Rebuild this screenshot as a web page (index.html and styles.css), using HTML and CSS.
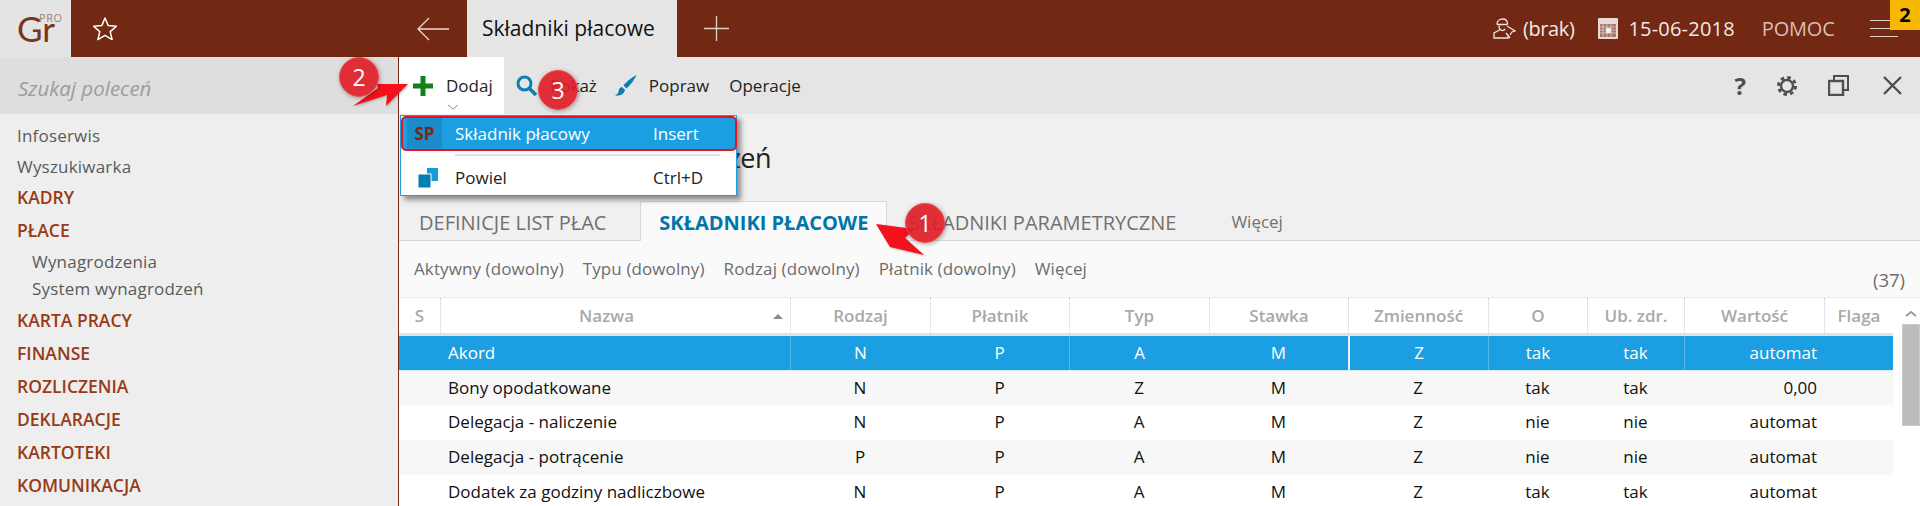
FILE: index.html
```html
<!DOCTYPE html>
<html lang="pl">
<head>
<meta charset="utf-8">
<title>Składniki płacowe</title>
<link rel="stylesheet" href="styles.css">
</head>
<body>
<div class="app">
  <header class="topbar">
    <div class="logo"><span class="logo-gr">Gr</span><span class="logo-pro">PRO</span></div>
    <div class="star-cell">
      <svg width="26" height="26" viewBox="0 0 26 26"><polygon points="13,2 16.2,9.6 24.4,10.2 18.2,15.6 20.1,23.6 13,19.3 5.9,23.6 7.8,15.6 1.6,10.2 9.8,9.6" fill="none" stroke="#fff" stroke-width="1.5" stroke-linejoin="round"/></svg>
    </div>
    <div class="back-cell">
      <svg width="34" height="24" viewBox="0 0 34 24"><path d="M33 12H2M13 1 2 12l11 11" fill="none" stroke="#e9d9d3" stroke-width="1.3"/></svg>
    </div>
    <div class="top-tab">Składniki płacowe</div>
    <div class="plus-cell">
      <svg width="25" height="25" viewBox="0 0 25 25"><path d="M12.500 0v25M0 12.500h25" stroke="#e2cfc8" stroke-width="1.300"/></svg>
    </div>
    <div class="top-right">
      <svg class="ic-user" width="23" height="21" viewBox="0 0 23 21"><path d="M4 6c0-3 2.500-5 5.500-5s5 2 5 5l-1 .5H5zM6 7.500c0 3 1.500 5 3.500 5 1 0 2-.6 2.700-1.700M6.500 12 1 15v5h14v-3.500M13 15l4 5M14 8l8 5-3 1-2 3" fill="none" stroke="#f1e4df" stroke-width="1.300"/></svg>
      <span class="top-val brak">(brak)</span>
      <svg class="ic-cal" width="20" height="21" viewBox="0 0 20 21"><rect width="20" height="21" rx="1" fill="#e8d9d3"/><rect x="2" y="6" width="16" height="13" fill="#a2796c"/><path d="M2 9h16M2 12h16M2 15h16M5 6v13M9 6v13M13 6v13" stroke="#e8d9d3" stroke-width=".7"/><rect x="8" y="10" width="5" height="5" fill="#f4ece8"/></svg>
      <span class="top-val date">15-06-2018</span>
      <span class="pomoc">POMOC</span>
      <div class="burger"><i></i><i></i><i></i></div>
    </div>
    <span class="top-badge">2</span>
  </header>

  <div class="main">
    <aside class="sidebar">
      <div class="search">Szukaj poleceń</div>
      <nav class="nav">
        <a class="nav-link">Infoserwis</a>
        <a class="nav-link">Wyszukiwarka</a>
        <a class="nav-group">KADRY</a>
        <a class="nav-group">PŁACE</a>
        <a class="nav-sub">Wynagrodzenia</a>
        <a class="nav-sub">System wynagrodzeń</a>
        <a class="nav-group">KARTA PRACY</a>
        <a class="nav-group">FINANSE</a>
        <a class="nav-group">ROZLICZENIA</a>
        <a class="nav-group">DEKLARACJE</a>
        <a class="nav-group">KARTOTEKI</a>
        <a class="nav-group">KOMUNIKACJA</a>
      </nav>
    </aside>

    <section class="content">
      <div class="toolbar">
        <div class="tool tool-add">
          <svg width="20" height="20" viewBox="0 0 20 20"><path d="M10 0v20M0 10h20" stroke="#14801c" stroke-width="5"/></svg>
          <span>Dodaj</span>
          <svg class="chev" width="12" height="6" viewBox="0 0 12 6"><path d="M1 1l5 4 5-4" fill="none" stroke="#8a8a8a"/></svg>
        </div>
        <div class="tool tool-show">
          <svg width="21" height="21" viewBox="0 0 21 21"><circle cx="8.500" cy="8.500" r="6.500" fill="none" stroke="#0a7fb3" stroke-width="3"/><path d="M13 13l7 7" stroke="#0a7fb3" stroke-width="3.500"/></svg>
          <span>Pokaż</span>
        </div>
        <div class="tool tool-edit">
          <svg width="22" height="21" viewBox="0 0 22 21"><path d="M21.500 0C18 1.500 12 6 8.500 10.500l3 3C15.500 10 20 4 21.500 0zM7 12c-3 .5-3 3-3.500 5-.3 1.500-2 2.500-3.500 3.500 4 .6 8.500-.5 10-5.500z" fill="#0a7fb3"/></svg>
          <span>Popraw</span>
        </div>
        <div class="tool tool-ops"><span>Operacje</span></div>
        <div class="tool-right">
          <span class="q">?</span>
          <svg width="22" height="22" viewBox="0 0 22 22"><circle cx="11" cy="11" r="6" fill="none" stroke="#4e4e4e" stroke-width="2.400"/><circle cx="11" cy="11" r="8.500" fill="none" stroke="#4e4e4e" stroke-width="3" stroke-dasharray="3.500 3.180"/></svg>
          <svg width="21" height="21" viewBox="0 0 21 21"><path d="M6 5V1h14v14h-5" fill="none" stroke="#4e4e4e" stroke-width="2"/><rect x="1" y="6" width="14" height="14" fill="none" stroke="#4e4e4e" stroke-width="2.400"/></svg>
          <svg class="ic-close" width="19" height="19" viewBox="0 0 19 19"><path d="M1 1l17 17M18 1 1 18" stroke="#4e4e4e" stroke-width="2.400"/></svg>
        </div>
      </div>

      <h1 class="title">Składniki wynagrodzeń</h1>

      <div class="tabs">
        <span class="tab">DEFINICJE LIST PŁAC</span>
        <span class="tab active">SKŁADNIKI PŁACOWE</span>
        <span class="tab">SKŁADNIKI PARAMETRYCZNE</span>
        <span class="tab more">Więcej</span>
      </div>

      <div class="filters">
        <span>Aktywny (dowolny)</span>
        <span>Typu (dowolny)</span>
        <span>Rodzaj (dowolny)</span>
        <span>Płatnik (dowolny)</span>
        <span>Więcej</span>
        <span class="count">(37)</span>
      </div>

      <div class="grid-wrap">
        <div class="grid">
          <div class="row head">
            <div>S</div><div class="sorted">Nazwa<i class="sort"></i></div><div>Rodzaj</div><div>Płatnik</div><div>Typ</div><div>Stawka</div><div>Zmienność</div><div>O</div><div>Ub. zdr.</div><div>Wartość</div><div>Flaga</div>
          </div>
          <div class="row sel">
            <div></div><div class="name">Akord</div><div>N</div><div>P</div><div>A</div><div>M</div><div>Z</div><div>tak</div><div>tak</div><div class="val">automat</div><div></div>
          </div>
          <div class="row alt">
            <div></div><div class="name">Bony opodatkowane</div><div>N</div><div>P</div><div>Z</div><div>M</div><div>Z</div><div>tak</div><div>tak</div><div class="val">0,00</div><div></div>
          </div>
          <div class="row">
            <div></div><div class="name">Delegacja - naliczenie</div><div>N</div><div>P</div><div>A</div><div>M</div><div>Z</div><div>nie</div><div>nie</div><div class="val">automat</div><div></div>
          </div>
          <div class="row alt">
            <div></div><div class="name">Delegacja - potrącenie</div><div>P</div><div>P</div><div>A</div><div>M</div><div>Z</div><div>nie</div><div>nie</div><div class="val">automat</div><div></div>
          </div>
          <div class="row">
            <div></div><div class="name">Dodatek za godziny nadliczbowe</div><div>N</div><div>P</div><div>A</div><div>M</div><div>Z</div><div>tak</div><div>tak</div><div class="val">automat</div><div></div>
          </div>
        </div>
        <div class="scrollbar">
          <svg width="12" height="7" viewBox="0 0 12 7"><path d="M1 6l5-4 5 4" fill="none" stroke="#9a9a9a" stroke-width="2"/></svg>
          <div class="thumb"></div>
        </div>
      </div>
    </section>
  </div>

  <div class="menu">
    <div class="menu-item selected">
      <span class="menu-ic sp">SP</span><span class="menu-label">Składnik płacowy</span><span class="menu-key">Insert</span>
    </div>
    <div class="menu-sep"></div>
    <div class="menu-item">
      <span class="menu-ic"><svg width="20" height="20" viewBox="0 0 20 20"><rect x="9" y="0" width="11" height="13" fill="#1b9ad6"/><rect x="0" y="6" width="13" height="14" fill="#007fb5" stroke="#fff"/></svg></span><span class="menu-label">Powiel</span><span class="menu-key">Ctrl+D</span>
    </div>
  </div>

  <svg class="arrows" width="1920" height="506" viewBox="0 0 1920 506">
    <polygon points="408,84 386,106 387,95 353,106 378,88 377,84" fill="#f4111b"/>
    <polygon points="876,224 914,229 905,238 924,255 890,247" fill="#f4111b"/>
  </svg>
  <span class="mark m1">1</span>
  <span class="mark m2">2</span>
  <span class="mark m3">3</span>
</div>
</body>
</html>
```
FILE: styles.css
```css
* { box-sizing: border-box; }
html, body { margin: 0; height: 100%; overflow: hidden; }
body { font-family: "Open Sans", "Noto Sans", sans-serif; font-size: 17px; color: #111; background: #fff; }
.app { position: relative; width: 1920px; height: 506px; overflow: hidden; }

/* top bar */
.topbar { display: flex; align-items: stretch; height: 57px; background: #722812; position: relative; }
.logo { width: 71px; background: #e4e4e4; position: relative; }
.logo-gr { position: absolute; left: 17px; top: 5px; font-family: "Lato", sans-serif; font-size: 35px; line-height: 46px; color: #7a3520; }
.logo-pro { position: absolute; left: 39px; top: 12px; font-size: 11px; line-height: 11px; letter-spacing: .6px; color: #a57d70; }
.star-cell { width: 330px; display: flex; align-items: center; padding-left: 21px; }
.back-cell { width: 66px; display: flex; align-items: center; padding-left: 15px; }
.top-tab { width: 210px; background: #e6e6e6; padding-left: 15px; font-size: 21px; line-height: 57px; color: #111; white-space: nowrap; }
.plus-cell { width: 76px; display: flex; align-items: center; padding-left: 27px; }
.top-right { flex: 1; display: flex; align-items: center; padding-left: 740px; color: #f3e9e5; white-space: nowrap; }
.top-val { font-size: 20px; letter-spacing: -.4px; }
.brak { margin-left: 7px; }
.ic-cal { margin-left: 24px; }
.date { margin-left: 10px; letter-spacing: .2px; }
.pomoc { margin-left: 27px; font-size: 20px; color: #d9bfb6; letter-spacing: -.2px; }
.burger { margin-left: 35px; width: 28px; flex: none; display: flex; flex-direction: column; gap: 7px; }
.burger i { display: block; height: 1px; background: #e3cfc8; }
.top-badge { position: absolute; right: 0; top: 0; width: 30px; height: 30px; background: #f9b800; color: #000; font-size: 20px; font-weight: 700; line-height: 30px; text-align: center; }

/* layout */
.main { display: flex; height: 449px; }
.sidebar { width: 399px; background: #eee; border-right: 1px solid #722812; flex: none; }
.search { height: 57px; background: #dedede; padding-left: 18px; font-size: 20.500px; font-style: italic; line-height: 62px; color: #9c9c9c; }
.nav { display: flex; flex-direction: column; padding: 6px 0 0 17px; }
.nav a { display: block; }
.nav-link { height: 30.500px; font-size: 17px; line-height: 31px; color: #5b5b5b; letter-spacing: .2px; }
.nav-group { height: 33px; font-size: 17.500px; font-weight: 600; line-height: 33px; color: #983a16; }
.nav-sub { height: 27px; padding-left: 15px; font-size: 17px; line-height: 27px; color: #5b5b5b; letter-spacing: .2px; }
.nav-group + .nav-sub { margin-top: 1px; }
.nav-sub + .nav-group { margin-top: 2px; }
.content { flex: 1; display: flex; flex-direction: column; min-width: 0; background: #f0f0f0; }

/* toolbar */
.toolbar { height: 57px; flex: none; background: #e5e5e5; display: flex; font-size: 17px; color: #222; }
.tool { display: flex; align-items: center; position: relative; height: 57px; }
.tool-add { width: 105px; background: #fff; padding-left: 14px; gap: 13px; }
.chev { position: absolute; left: 48px; top: 47px; }
.tool-show { margin-left: 12px; gap: 13px; }
.tool-edit { margin-left: 18px; gap: 12px; }
.tool-ops { margin-left: 20px; }
.tool-right { margin-left: auto; display: flex; align-items: center; gap: 30px; padding-right: 18px; }
.ic-close { margin-left: 4px; }
.q { font-size: 24px; font-weight: 700; color: #4e4e4e; }

.title { margin: 0; height: 87px; flex: none; padding: 24px 0 0 95px; font-size: 27px; font-weight: 400; line-height: 40px; color: #222; letter-spacing: -.5px; }

/* tabs */
.tabs { height: 40px; flex: none; display: flex; align-items: stretch; border-bottom: 1px solid #d9d9d9; font-size: 20px; color: #707070; padding-left: 20px; white-space: nowrap; }
.tab { line-height: 44px; }
.tab.active { width: 247px; margin: 0 21px 0 34px; border: 1px solid #d9d9d9; border-bottom: 0; border-radius: 2px 2px 0 0; background: #fafafa; color: #0076a8; font-weight: 700; text-align: center; height: 40px; line-height: 42px; }
.tab.more { margin-left: 55px; font-size: 17px; line-height: 42px; }

/* filters */
.filters { height: 57px; flex: none; background: #fafafa; border-bottom: 1px solid #ececec; display: flex; align-items: flex-start; gap: 19px; padding: 16px 0 0 15px; font-size: 17px; line-height: 24px; color: #6d6d6d; letter-spacing: .1px; position: relative; }
.count { position: absolute; right: 15px; top: 27px; font-size: 18.500px; letter-spacing: 0; }

/* grid */
.grid-wrap { flex: 1; display: flex; background: #fff; min-height: 0; overflow: hidden; }
.grid { width: 1494px; flex: none; }
.row { display: grid; grid-template-columns: 41px 350px 140px 139px 140px 139px 140px 99px 97px 140px 69px; height: 34.670px; font-size: 17px; line-height: 34px; text-align: center; color: #111; white-space: nowrap; }
.row.alt { background: #f7f7f7; }
.row.sel { background: #1c9fe2; color: #fff; border-bottom: 1px solid #d8eefa; }
.row.sel > div:nth-child(3), .row.sel > div:nth-child(5), .row.sel > div:nth-child(8), .row.sel > div:nth-child(10) { border-left: 1px solid #56b8ea; }
.row.sel > div:nth-child(7) { border-left: 2px solid #eaf6fc; }
.row.head { height: 38px; border-bottom: 3px solid #e2e2e2; font-weight: 600; color: #a9a9a9; line-height: 36px; background: #fff; }
.row.head > div + div { border-left: 1px dotted #cfcfcf; }
.row .name { text-align: left; padding-left: 8px; }
.row .val { text-align: right; padding-right: 7px; }
.sorted { position: relative; padding-right: 18px; }
.sort { position: absolute; right: 7px; top: 16px; border: 5px solid transparent; border-top: 0; border-bottom: 5px solid #8c8c8c; }
.scrollbar { flex: 1; display: flex; flex-direction: column; align-items: center; padding: 12px 0 0 9px; background: #fff; }
.thumb { width: 18px; height: 102px; margin-top: 7px; background: #bcbcbc; border: 1px solid #c9c9c9; }

/* dropdown */
.menu { position: absolute; left: 400px; top: 115px; width: 337px; height: 81px; background: #fff; border: 1px solid #1c9fe2; box-shadow: 4px 4px 5px rgba(60, 60, 60, .55); font-size: 17px; color: #222; }
.menu-item { display: flex; align-items: center; height: 35px; position: relative; }
.menu-item.selected { background: #1c9fe2; color: #fff; border: 2px solid #e7121d; border-radius: 5px; margin: 0 -1px 0 0; }
.menu-ic { width: 54px; display: flex; align-items: center; justify-content: center; flex: none; }
.menu-ic.sp { width: 35px; height: 100%; margin: 0 13px 0 4px; background: #1b8cc8; color: #7a2712; font-weight: 700; }
.menu-label { width: 198px; flex: none; }
.menu-sep { height: 2px; margin: 3px 16px 4px 54px; background: #e2e2e2; }

/* annotations */
.arrows { position: absolute; left: 0; top: 0; pointer-events: none; filter: drop-shadow(1px 1px 1px rgba(0,0,0,.25)); }
.mark { position: absolute; width: 40px; height: 40px; border-radius: 50%; background: rgba(224, 30, 40, .92); border: 1px solid #f14a50; box-shadow: 1px 1px 4px rgba(0,0,0,.35); color: #fff; font-size: 23px; line-height: 38px; text-align: center; }
.m1 { left: 905px; top: 203px; }
.m2 { left: 339px; top: 57px; }
.m3 { left: 538px; top: 70px; }
```
